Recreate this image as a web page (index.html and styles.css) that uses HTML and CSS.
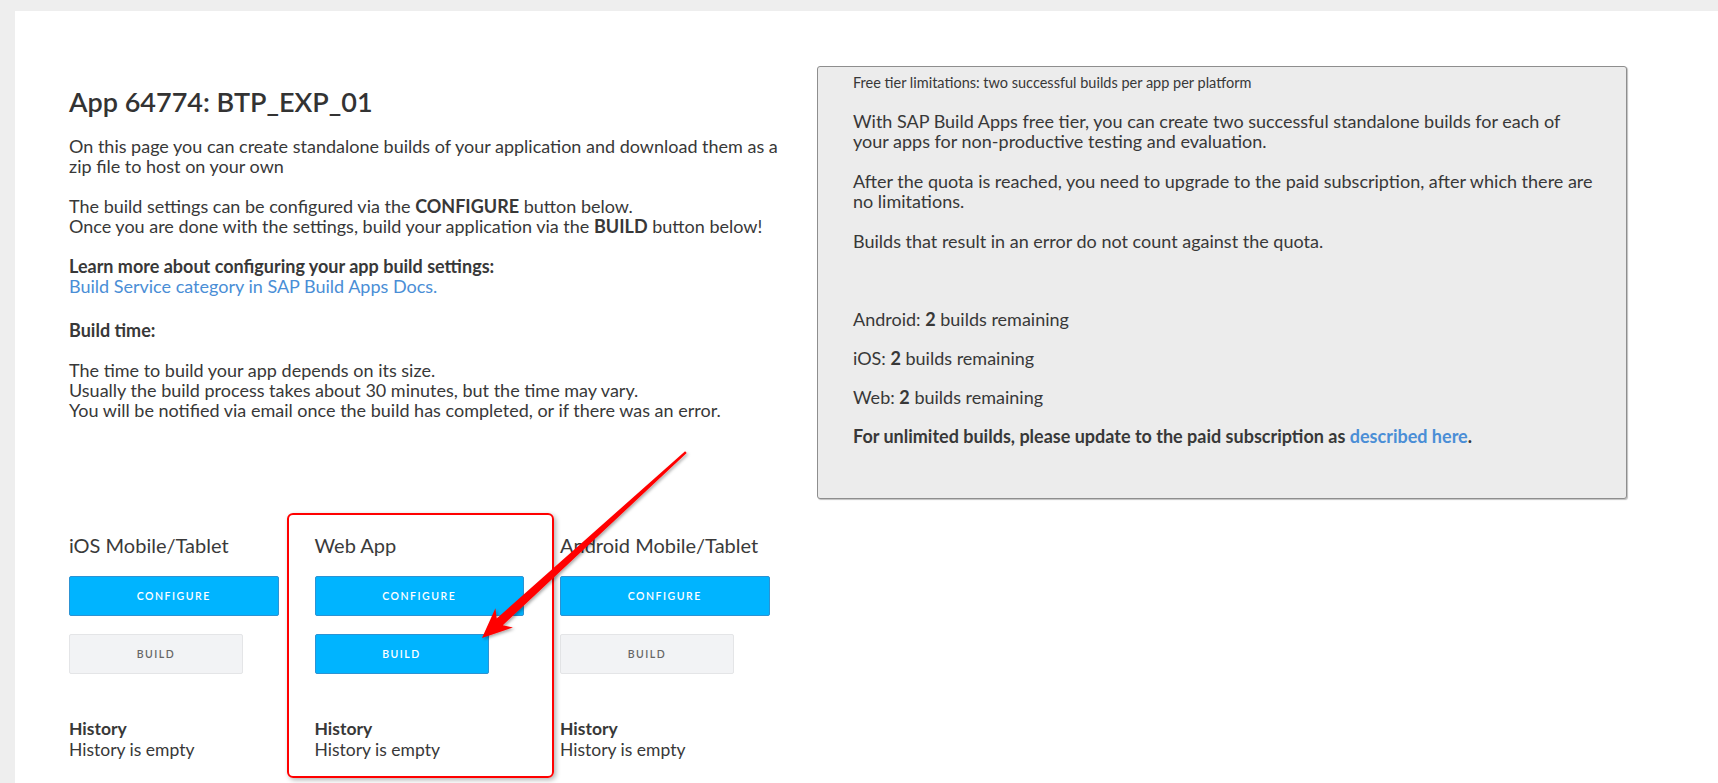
FILE: index.html
```html
<!DOCTYPE html>
<html lang="en">
<head>
<meta charset="utf-8">
<title>App 64774: BTP_EXP_01</title>
<link rel="stylesheet" href="styles.css">
</head>
<body>
<div class="panel">
  <div class="layout">
    <div class="main">
      <h1 class="title">App 64774: BTP_EXP_01</h1>
      <p class="p">On this page you can create standalone builds of your application and download them as a zip file to host on your own</p>
      <p class="p">The build settings can be configured via the <b>CONFIGURE</b> button below.<br>Once you are done with the settings, build your application via the <b>BUILD</b> button below!</p>
      <p class="p"><b>Learn more about configuring your app build settings:</b><br><a class="link" href="#">Build Service category in SAP Build Apps Docs.</a></p>
      <p class="p p-time"><b>Build time:</b></p>
      <p class="p">The time to build your app depends on its size.<br>Usually the build process takes about 30 minutes, but the time may vary.<br>You will be notified via email once the build has completed, or if there was an error.</p>

      <div class="platforms">
        <div class="platform">
          <div class="platform-name">iOS Mobile/Tablet</div>
          <button class="btn btn-primary btn-wide">CONFIGURE</button>
          <button class="btn btn-disabled">BUILD</button>
          <div class="history">
            <div class="history-title">History</div>
            <div class="history-text">History is empty</div>
          </div>
        </div>
        <div class="platform">
          <div class="platform-name">Web App</div>
          <button class="btn btn-primary btn-wide">CONFIGURE</button>
          <button class="btn btn-primary">BUILD</button>
          <div class="history">
            <div class="history-title">History</div>
            <div class="history-text">History is empty</div>
          </div>
        </div>
        <div class="platform">
          <div class="platform-name">Android Mobile/Tablet</div>
          <button class="btn btn-primary btn-wide">CONFIGURE</button>
          <button class="btn btn-disabled">BUILD</button>
          <div class="history">
            <div class="history-title">History</div>
            <div class="history-text">History is empty</div>
          </div>
        </div>
      </div>
    </div>

    <aside class="notice">
      <div class="notice-head">Free tier limitations: two successful builds per app per platform</div>
      <p class="np">With SAP Build Apps free tier, you can create two successful standalone builds for each of your apps for non-productive testing and evaluation.</p>
      <p class="np">After the quota is reached, you need to upgrade to the paid subscription, after which there are no limitations.</p>
      <p class="np np-gap">Builds that result in an error do not count against the quota.</p>
      <p class="np np-count">Android: <b>2</b> builds remaining</p>
      <p class="np np-count">iOS: <b>2</b> builds remaining</p>
      <p class="np np-count">Web: <b>2</b> builds remaining</p>
      <p class="np np-last"><b>For unlimited builds, please update to the paid subscription as <a class="link" href="#">described here</a>.</b></p>
    </aside>
  </div>
</div>

<div class="highlight"></div>
<svg class="arrow" width="1718" height="783" viewBox="0 0 1718 783" xmlns="http://www.w3.org/2000/svg">
  <defs>
    <filter id="sh" x="-20%" y="-20%" width="140%" height="140%">
      <feDropShadow dx="1.5" dy="1.5" stdDeviation="1.5" flood-color="#000" flood-opacity="0.35"/>
    </filter>
  </defs>
  <polygon filter="url(#sh)" fill="#ff0000" points="482,638 512.9,627.4 502.8,625.2 686.7,453 685.1,451.2 496.7,618.5 495.4,608.2"/>
</svg>
</body>
</html>
```

FILE: styles.css
```css
* { box-sizing: border-box; }

html, body {
  margin: 0;
  padding: 0;
}

body {
  background: #eeeeee;
  font-family: Lato, "Open Sans", "Liberation Sans", sans-serif;
  color: #383838;
  font-size: 18px;
  line-height: 20px;
  overflow: hidden;
}

.panel {
  margin: 11px 0 0 15px;
  background: #ffffff;
  min-height: calc(100vh - 11px);
  padding: 55px 0 0 54px;
}

.layout {
  display: grid;
  grid-template-columns: 730px 810px;
  column-gap: 18px;
  align-items: start;
}

.title {
  margin: 21px 0 19px;
  font-size: 27px;
  line-height: 30px;
  font-weight: 600;
  color: #333333;
}

.p {
  margin: 0 0 20px;
}

.p b { font-weight: 700; }

.p-time { margin-top: 24px; }

.link {
  color: #4a8ed6;
  text-decoration: none;
}

.platforms {
  display: grid;
  grid-template-columns: repeat(3, 209.5px);
  column-gap: 36px;
  margin-top: 113px;
}

.platform {
  display: flex;
  flex-direction: column;
  align-items: flex-start;
}

.platform-name {
  font-size: 20px;
  line-height: 24px;
  color: #3a3a3a;
  margin-bottom: 19px;
  white-space: nowrap;
}

.btn {
  font-family: Lato, "Open Sans", "Liberation Sans", sans-serif;
  font-size: 10.5px;
  font-weight: 600;
  letter-spacing: 1.5px;
  height: 40px;
  width: 174px;
  border-radius: 2px;
  padding: 0;
  margin: 0 0 18px;
  cursor: pointer;
}

.btn-wide { width: 209.5px; }

.btn-primary {
  background: #00b4ff;
  border: 1px solid #2c93d3;
  color: #ffffff;
}

.btn-disabled {
  background: #f2f3f5;
  border: 1px solid #e4e5e7;
  color: #666666;
}

.history {
  margin-top: 27px;
  font-size: 17.5px;
}

.history-title {
  font-weight: 700;
  line-height: 20px;
}

.history-text {
  line-height: 21px;
}

.notice {
  background: #ececec;
  border: 1px solid #8e8e8e;
  border-radius: 3px;
  box-shadow: 1px 1px 1px rgba(0, 0, 0, 0.25);
  padding: 8px 30px 52px 35px;
}

.notice-head {
  font-size: 14.5px;
  line-height: 16px;
  margin-bottom: 20px;
}

.np {
  margin: 0 0 20px;
}

.np-gap { margin-bottom: 58px; }

.np-count { margin-bottom: 19px; }

.np-last { margin: 0; }

.np b { font-weight: 700; }

.highlight {
  position: absolute;
  left: 287px;
  top: 513px;
  width: 267px;
  height: 265px;
  border: 2px solid #ff0000;
  border-radius: 6px;
  box-shadow: 2px 2px 5px rgba(0, 0, 0, 0.3);
  pointer-events: none;
}

.arrow {
  position: absolute;
  left: 0;
  top: 0;
  pointer-events: none;
}
```
